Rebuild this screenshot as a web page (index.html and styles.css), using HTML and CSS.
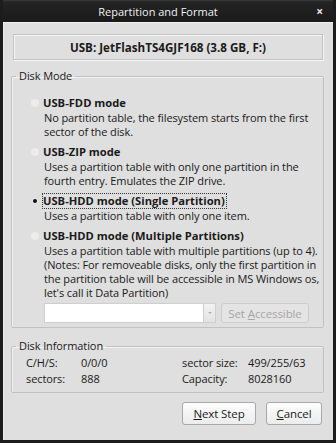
FILE: index.html
```html
<!DOCTYPE html>
<html lang="en">
<head>
    <meta charset="UTF-8">
    <title>Repartition and Format</title>
    <link rel="stylesheet" href="styles.css">
</head>
<body>
    <div class="window">
        <div class="titlebar">
            <span class="title">Repartition and Format</span>
            <span class="close">&#215;</span>
        </div>

        <div class="content">
            <div class="device">USB: JetFlashTS4GJF168 (3.8 GB, F:)</div>

            <fieldset class="group mode">
                <legend>Disk Mode</legend>
                <div class="group-body">
                    <div class="option">
                        <div class="opt-head"><span class="radio"></span><span class="opt-label">USB-FDD mode</span></div>
                        <div class="opt-desc">No partition table, the filesystem starts from the first<br>sector of the disk.</div>
                    </div>

                    <div class="option">
                        <div class="opt-head"><span class="radio"></span><span class="opt-label">USB-ZIP mode</span></div>
                        <div class="opt-desc">Uses a partition table with only one partition in the<br>fourth entry. Emulates the ZIP drive.</div>
                    </div>

                    <div class="option">
                        <div class="opt-head"><span class="radio checked"></span><span class="opt-label focus">USB-HDD mode (Single Partition)</span></div>
                        <div class="opt-desc">Uses a partition table with only one item.</div>
                    </div>

                    <div class="option last">
                        <div class="opt-head"><span class="radio"></span><span class="opt-label">USB-HDD mode (Multiple Partitions)</span></div>
                        <div class="opt-desc">Uses a partition table with multiple partitions (up to 4).<br>(Notes: For removeable disks, only the first partition in<br>the partition table will be accessible in MS Windows os,<br>let's call it Data Partition)</div>
                    </div>

                    <div class="partition-row">
                        <div class="combo">
                            <span class="combo-field"></span>
                            <span class="combo-btn"><span class="arrow"></span></span>
                        </div>
                        <button class="btn disabled" disabled>Set <u>A</u>ccessible</button>
                    </div>
                </div>
            </fieldset>

            <fieldset class="group info">
                <legend>Disk Information</legend>
                <div class="info-grid">
                    <span>C/H/S:</span><span>0/0/0</span><span>sector size:</span><span>499/255/63</span>
                    <span>sectors:</span><span>888</span><span>Capacity:</span><span>8028160</span>
                </div>
            </fieldset>

            <div class="actions">
                <button class="btn next"><u>N</u>ext Step</button>
                <button class="btn cancel"><u>C</u>ancel</button>
            </div>
        </div>
    </div>
</body>
</html>
```

FILE: styles.css
```css
html, body {
    margin: 0;
    padding: 0;
    background: #dfdfdf;
}
body {
    font-family: 'Open Sans', 'DejaVu Sans', sans-serif;
    font-size: 11px;
    letter-spacing: -0.1px;
    color: #1a1a1a;
}
.window {
    width: 336px;
    height: 443px;
    box-sizing: border-box;
    background: #dfdfdf;
    border-left: 3px solid #1c1c1c;
    border-right: 3px solid #1c1c1c;
    border-bottom: 3px solid #1c1c1c;
    display: flex;
    flex-direction: column;
    overflow: hidden;
}
.titlebar {
    height: 22px;
    margin: 0 -3px;
    padding-right: 20px;
    background: linear-gradient(#3a3a3a 0, #242424 2px, #1a1a1a 100%);
    border-radius: 3px 3px 0 0;
    display: flex;
    align-items: center;
    justify-content: center;
    position: relative;
}
.title {
    color: #f2f2f2;
    font-size: 11px;
    letter-spacing: 0;
}
.close {
    position: absolute;
    right: 13px;
    top: 3px;
    color: #e8e8e8;
    font-size: 12px;
    font-weight: bold;
}
.content {
    flex: 1;
    padding: 11px 9px 0 7px;
    border-left: 1px solid #ececec;
    border-top: 1px solid #f0f0f0;
}
.device {
    height: 24px;
    margin: 0 1px 0 2px;
    border: 1px solid #c4c4c4;
    box-shadow: inset 1px 1px 0 #f4f4f4, 1px 1px 0 #f4f4f4;
    display: flex;
    align-items: center;
    justify-content: center;
    font-weight: bold;
    font-size: 11.6px;
    letter-spacing: 0;
}
.group {
    margin: 0;
    border: 1px solid #c2c2c2;
    border-radius: 2px;
    box-shadow: 1px 1px 0 #f2f2f2 inset;
    padding: 0;
    box-sizing: border-box;
}
.group legend {
    margin-left: 4px;
    padding: 0 3px;
    line-height: 14px;
}
.mode {
    margin-top: 9px;
    height: 259px;
}
.group-body {
    padding: 12px 0 0 19px;
}
.option {
    margin-bottom: 5px;
}
.option.last {
    margin-bottom: 0;
}
.opt-head {
    display: flex;
    align-items: center;
    height: 16px;
}
.radio {
    width: 8px;
    height: 8px;
    border-radius: 50%;
    background: #ececec;
    margin-right: 3px;
    position: relative;
}
.radio.checked {
    background: #e2e2e2;
}
.radio.checked::after {
    content: "";
    position: absolute;
    left: 2px;
    top: 2px;
    width: 4px;
    height: 4px;
    border-radius: 50%;
    background: #111;
}
.opt-label {
    font-weight: bold;
    font-size: 11.2px;
    letter-spacing: 0;
    line-height: 14px;
    padding: 0 1px 0 0;
    border: 1px dotted transparent;
}
.opt-label.focus {
    border-color: #333;
}
.opt-desc {
    margin-left: 13px;
    line-height: 14px;
    white-space: nowrap;
}
.partition-row {
    display: flex;
    align-items: center;
    margin: 3px 0 0 13px;
}
.combo {
    display: flex;
    width: 172px;
    height: 20px;
}
.combo-field {
    flex: 1;
    background: #fff;
    border: 1px solid #cfcfcf;
}
.combo-btn {
    width: 11px;
    border: 1px solid #cfcfcf;
    border-left: none;
    background: linear-gradient(#f2f2f2, #e2e2e2);
    display: flex;
    align-items: center;
    justify-content: center;
}
.arrow {
    width: 0;
    height: 0;
    border-left: 2px solid transparent;
    border-right: 2px solid transparent;
    border-top: 2px solid #b0b0b0;
}
.btn {
    font-family: inherit;
    font-size: 11.5px;
    letter-spacing: -0.1px;
    color: #1a1a1a;
    background: linear-gradient(#fdfdfd, #ececec);
    border: 1px solid #a8a8a8;
    border-radius: 3px;
    padding: 0;
    height: 23px;
}
.btn.disabled {
    color: #a6a6a6;
    border-color: #cdcdcd;
    background: #e4e4e4;
    height: 20px;
    width: 88px;
    margin-left: 5px;
}
.info {
    margin-top: 11px;
    height: 54px;
}
.info-grid {
    display: grid;
    grid-template-columns: 55px 101px 66px auto;
    line-height: 16px;
    padding: 2px 0 0 14px;
}
.actions {
    display: flex;
    justify-content: flex-end;
    gap: 10px;
    margin-top: 9px;
    padding-right: 2px;
}
.next {
    width: 74px;
}
.cancel {
    width: 56px;
}
```
